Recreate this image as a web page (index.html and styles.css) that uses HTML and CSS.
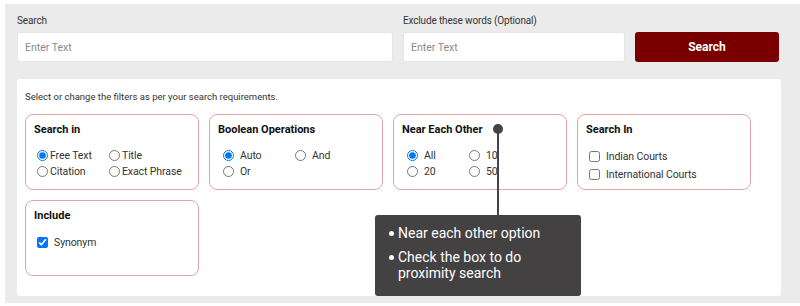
FILE: index.html
```html
<!DOCTYPE html>
<html lang="en">
<head>
    <meta charset="UTF-8">
    <meta name="viewport" content="width=device-width, initial-scale=1.0">
    <title>Search</title>
    <link rel="stylesheet" href="styles.css">
</head>
<body>
    <div class="wrap">
        <div class="search-row">
            <div class="field">
                <label for="q">Search</label>
                <input type="text" id="q" placeholder="Enter Text">
            </div>
            <div class="field">
                <label for="ex">Exclude these words (Optional)</label>
                <input type="text" id="ex" placeholder="Enter Text">
            </div>
            <button class="search-btn">Search</button>
        </div>

        <div class="panel">
            <p class="intro">Select or change the filters as per your search requirements.</p>
            <div class="filters">
                <div class="filter">
                    <h3>Search in</h3>
                    <div class="opts opts-search tight">
                        <label><input type="radio" name="in" checked>Free Text</label>
                        <label><input type="radio" name="in">Title</label>
                        <label><input type="radio" name="in">Citation</label>
                        <label><input type="radio" name="in">Exact Phrase</label>
                    </div>
                </div>
                <div class="filter">
                    <h3>Boolean Operations</h3>
                    <div class="opts opts-bool spaced">
                        <label><input type="radio" name="bool" checked>Auto</label>
                        <label><input type="radio" name="bool">And</label>
                        <label><input type="radio" name="bool">Or</label>
                    </div>
                </div>
                <div class="filter">
                    <h3>Near Each Other</h3>
                    <div class="opts opts-near spaced">
                        <label><input type="radio" name="near" checked>All</label>
                        <label><input type="radio" name="near">10</label>
                        <label><input type="radio" name="near">20</label>
                        <label><input type="radio" name="near">50</label>
                    </div>
                </div>
                <div class="filter">
                    <h3>Search In</h3>
                    <div class="checks">
                        <label><input type="checkbox">Indian Courts</label>
                        <label><input type="checkbox">International Courts</label>
                    </div>
                </div>
                <div class="filter">
                    <h3>Include</h3>
                    <div class="checks">
                        <label><input type="checkbox" checked>Synonym</label>
                    </div>
                </div>
            </div>

            <!-- hint for the near each other box -->
            <span class="hint-dot"></span>
            <span class="hint-stem"></span>
            <div class="hint-box">
                <ul>
                    <li>Near each other option</li>
                    <li>Check the box to do proximity search</li>
                </ul>
            </div>
        </div>
    </div>
</body>
</html>
```

FILE: styles.css
```css
body {
    margin: 0;
    font-family: 'Roboto', 'Liberation Sans', sans-serif;
    color: #222;
    background-color: #fff;
}

.wrap {
    margin: 4px 0 0 5px;
    padding: 10px 19px 7px 12px;
    background-color: #ebebeb;
}

.search-row {
    display: grid;
    grid-template-columns: 376px 222px 144px;
    gap: 10px;
    align-items: end;
}

.field {
    display: flex;
    flex-direction: column;
}

.field label {
    font-size: 10px;
    letter-spacing: -0.15px;
    line-height: 13px;
    color: #333;
    margin-bottom: 5px;
}

.field input {
    height: 30px;
    box-sizing: border-box;
    border: 1px solid #e6e6e6;
    border-radius: 3px;
    padding: 0 7px;
    font-family: 'Roboto', 'Liberation Sans', sans-serif;
    font-size: 10.5px;
    background-color: #fff;
    outline: none;
}

.field input::placeholder {
    color: #8a8a8a;
}

.search-btn {
    height: 30px;
    border: none;
    border-radius: 3px;
    background-color: #7a0000;
    color: #fff;
    font-family: 'Roboto', 'Liberation Sans', sans-serif;
    font-size: 12px;
    font-weight: 700;
    cursor: pointer;
}

.panel {
    position: relative;
    margin-top: 17px;
    padding: 11px 8px 20px;
    background-color: #fff;
    border-radius: 3px;
}

.intro {
    margin: 0 0 10px;
    font-size: 9.5px;
    line-height: 14px;
    color: #333;
}

.filters {
    display: grid;
    grid-template-columns: repeat(4, 174px);
    gap: 10px;
}

.filter {
    height: 76px;
    box-sizing: border-box;
    border: 1px solid #e0a5a5;
    border-radius: 8px;
    padding: 8px 8px 0;
}

.filter h3 {
    margin: 0 0 10px;
    font-size: 11px;
    line-height: 14px;
    font-weight: 700;
    color: #111;
}

.opts {
    display: grid;
    grid-auto-rows: 16px;
    padding-left: 3px;
}

.opts-search {
    grid-template-columns: 72px auto;
}

.opts-bool {
    grid-template-columns: 72px auto;
    padding-left: 5px;
}

.opts-near {
    grid-template-columns: 62px auto;
    padding-left: 5px;
}

.opts label, .checks label {
    display: flex;
    align-items: center;
    font-size: 10.5px;
    letter-spacing: -0.1px;
    color: #333;
    white-space: nowrap;
}

.opts input {
    width: 11px;
    height: 11px;
    margin: 0;
}

.tight input {
    margin-right: 2px;
}

.spaced input {
    margin-right: 6px;
}

.checks {
    display: grid;
    grid-auto-rows: 18px;
    padding-left: 3px;
}

.checks input {
    width: 11px;
    height: 11px;
    margin: 0 6px 0 0;
}

.hint-dot {
    position: absolute;
    left: 476px;
    top: 45px;
    width: 10px;
    height: 10px;
    border-radius: 50%;
    background-color: #444;
}

.hint-stem {
    position: absolute;
    left: 480px;
    top: 50px;
    width: 2px;
    height: 86px;
    background-color: #444;
}

.hint-box {
    position: absolute;
    left: 358px;
    top: 136px;
    width: 206px;
    box-sizing: border-box;
    padding: 10px 14px 15px;
    background-color: #434142;
    border-radius: 3px;
    color: #fff;
}

.hint-box ul {
    margin: 0;
    padding: 0;
    list-style: none;
}

.hint-box li {
    position: relative;
    padding-left: 9px;
    font-size: 14px;
    line-height: 16px;
}

.hint-box li + li {
    margin-top: 8px;
}

.hint-box li::before {
    content: "";
    position: absolute;
    left: 0;
    top: 6px;
    width: 5px;
    height: 5px;
    border-radius: 50%;
    background-color: #fff;
}
```
